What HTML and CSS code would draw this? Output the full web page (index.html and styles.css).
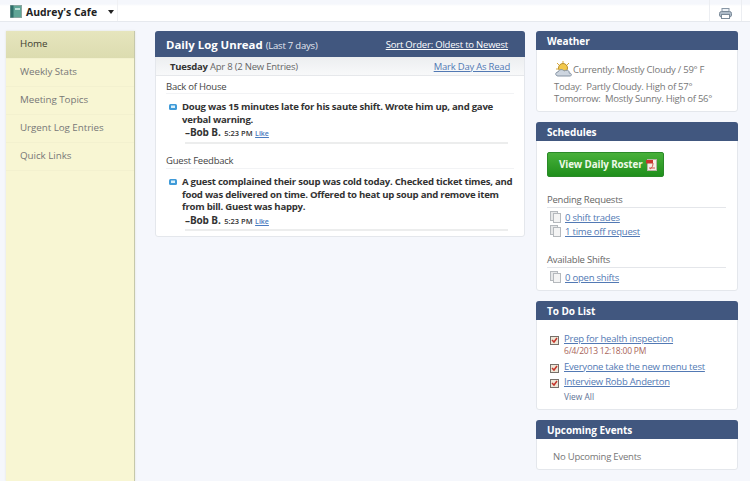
FILE: index.html
```html
<!DOCTYPE html>
<html>
<head>
<meta charset="utf-8">
<title>Audrey's Cafe</title>
<link rel="stylesheet" href="styles.css">
</head>
<body>
<header class="topbar">
  <div class="site">
    <svg class="book" width="12" height="13" viewBox="0 0 12 13"><rect x="0.5" y="0.5" width="11" height="12" fill="#5fa596" stroke="#8aa5a0"/><rect x="0.5" y="0.5" width="3" height="12" fill="#2f6f6a"/><rect x="5" y="3" width="5" height="2" fill="#bfe0d8"/></svg>
    <span class="site-name">Audrey's Cafe</span>
    <span class="caret"></span>
  </div>
  <div class="printer-cell">
    <svg width="13" height="11" viewBox="0 0 13 11"><rect x="3" y="0.5" width="7" height="4" fill="#eef2f6" stroke="#8796a5"/><rect x="0.5" y="3.5" width="12" height="5.5" rx="2" fill="#aebbc8" stroke="#7b8a99"/><rect x="2.5" y="6.5" width="8" height="4" fill="#fff" stroke="#7b8a99"/></svg>
  </div>
</header>
<div class="layout">
  <nav class="sidebar">
    <a class="nav-item active">Home</a>
    <a class="nav-item">Weekly Stats</a>
    <a class="nav-item">Meeting Topics</a>
    <a class="nav-item">Urgent Log Entries</a>
    <a class="nav-item">Quick Links</a>
  </nav>
  <main class="main">
    <section class="panel log">
      <div class="log-head">
        <h1>Daily Log Unread <small>(Last 7 days)</small></h1>
        <a class="sort">Sort Order: Oldest to Newest</a>
      </div>
      <div class="day-bar">
        <span><b>Tuesday</b> Apr 8 (2 New Entries)</span>
        <a class="link">Mark Day As Read</a>
      </div>
      <div class="group">
        <h2>Back of House</h2>
        <div class="entry">
          <svg class="msg" width="8" height="6" viewBox="0 0 8 6"><rect width="8" height="6" rx="1.5" fill="#3f9ad8"/><rect x="2" y="1.5" width="4" height="2.5" fill="#d8effa"/></svg>
          <div class="entry-body">
            <p>Doug was 15 minutes late for his saute shift. Wrote him up, and gave verbal warning.</p>
            <div class="by"><b>–Bob B.</b> <span class="time">5:23 PM</span> <a class="like">Like</a></div>
          </div>
        </div>
      </div>
      <div class="group second">
        <h2>Guest Feedback</h2>
        <div class="entry">
          <svg class="msg" width="8" height="6" viewBox="0 0 8 6"><rect width="8" height="6" rx="1.5" fill="#3f9ad8"/><rect x="2" y="1.5" width="4" height="2.5" fill="#d8effa"/></svg>
          <div class="entry-body">
            <p>A guest complained their soup was cold today. Checked ticket times, and food was delivered on time. Offered to heat up soup and remove item from bill. Guest was happy.</p>
            <div class="by last"><b>–Bob B.</b> <span class="time">5:23 PM</span> <a class="like">Like</a></div>
          </div>
        </div>
      </div>
    </section>
  </main>
  <aside class="right">
    <section class="panel card weather">
      <h3>Weather</h3>
      <div class="weather-body">
        <div class="now">
          <svg width="18" height="17" viewBox="0 0 18 17"><circle cx="8" cy="7" r="4.5" fill="#f2c84b" stroke="#b98f2a"/><g stroke="#d9a93a"><path d="M8 0v2M2 2l2 2M14 2l-2 2M1 8h2"/></g><path d="M3 15c-3 0-3-4 0-4 1-3 5-3 6-1 3-2 6 0 5 2 3 0 3 3 1 3z" fill="#cdd5df" stroke="#8593a3"/></svg>
          <span>Currently: Mostly Cloudy / 59° F</span>
        </div>
        <div>Today:&nbsp; Partly Cloudy. High of 57°</div>
        <div>Tomorrow:&nbsp; Mostly Sunny. High of 56°</div>
      </div>
    </section>
    <section class="panel card schedules">
      <h3>Schedules</h3>
      <div class="sched-body">
        <a class="roster">View Daily Roster
          <svg width="11" height="12" viewBox="0 0 11 12"><rect x="1.5" y="0.5" width="9" height="11" fill="#f4efe6" stroke="#b9b3a6"/><rect x="0" y="1" width="7" height="3.5" fill="#c8342c"/><path d="M4 10c2-1 3-3 3-6M3 9h6" stroke="#d2554c" fill="none"/></svg>
        </a>
        <h4>Pending Requests</h4>
        <div class="row"><svg class="docs" width="12" height="12" viewBox="0 0 12 12"><rect x="0.5" y="0.5" width="7" height="9" fill="#e6e7e8" stroke="#b5b9bd"/><rect x="3.5" y="2.5" width="7" height="9" fill="#f4f4f4" stroke="#b5b9bd"/></svg><a class="link">0 shift trades</a></div>
        <div class="row"><svg class="docs" width="12" height="12" viewBox="0 0 12 12"><rect x="0.5" y="0.5" width="7" height="9" fill="#e6e7e8" stroke="#b5b9bd"/><rect x="3.5" y="2.5" width="7" height="9" fill="#f4f4f4" stroke="#b5b9bd"/></svg><a class="link">1 time off request</a></div>
        <h4 class="avail">Available Shifts</h4>
        <div class="row"><svg class="docs" width="12" height="12" viewBox="0 0 12 12"><rect x="0.5" y="0.5" width="7" height="9" fill="#e6e7e8" stroke="#b5b9bd"/><rect x="3.5" y="2.5" width="7" height="9" fill="#f4f4f4" stroke="#b5b9bd"/></svg><a class="link">0 open shifts</a></div>
      </div>
    </section>
    <section class="panel card todo">
      <h3>To Do List</h3>
      <div class="todo-body">
        <div class="todo-row"><svg class="check" width="9" height="10" viewBox="0 0 9 10"><rect x="0.5" y="1.5" width="8" height="8" fill="#eee7d8" stroke="#77706a"/><path d="M2 5l2 2 3-4" stroke="#c5352b" stroke-width="1.5" fill="none"/></svg><div><a class="link">Prep for health inspection</a><div class="date">6/4/2013 12:18:00 PM</div></div></div>
        <div class="todo-row"><svg class="check" width="9" height="10" viewBox="0 0 9 10"><rect x="0.5" y="1.5" width="8" height="8" fill="#eee7d8" stroke="#77706a"/><path d="M2 5l2 2 3-4" stroke="#c5352b" stroke-width="1.5" fill="none"/></svg><div><a class="link">Everyone take the new menu test</a></div></div>
        <div class="todo-row"><svg class="check" width="9" height="10" viewBox="0 0 9 10"><rect x="0.5" y="1.5" width="8" height="8" fill="#eee7d8" stroke="#77706a"/><path d="M2 5l2 2 3-4" stroke="#c5352b" stroke-width="1.5" fill="none"/></svg><div><a class="link">Interview Robb Anderton</a></div></div>
        <a class="view-all">View All</a>
      </div>
    </section>
    <section class="panel card events">
      <h3>Upcoming Events</h3>
      <div class="events-body">No Upcoming Events</div>
    </section>
  </aside>
</div>
</body>
</html>
```
FILE: styles.css
```css
* { box-sizing: border-box; }
html, body { height: 100%; }
body {
  margin: 0;
  background: #f5f7fc;
  font-family: "Open Sans", sans-serif;
  font-size: 9.5px;
  letter-spacing: -0.22px;
  color: #555;
  overflow: hidden;
}
h1, h2, h3, h4, p { margin: 0; font-weight: normal; }
.topbar {
  height: 22px;
  background: linear-gradient(#f5f7fc 4px, #fff 6px);
  border-bottom: 1px solid #e6e9ee;
  display: flex;
  justify-content: space-between;
  padding-left: 6px;
}
.site { display: flex; align-items: center; gap: 4px; height: 21px; padding: 2px 0 0 4px; width: 112px; border-right: 1px solid #f0f1f4; }
.site-name { font-size: 10.4px; font-weight: 700; color: #222; white-space: nowrap; letter-spacing: 0; }
.caret { width: 0; height: 0; border: 3px solid transparent; border-top: 4px solid #222; border-bottom: 0; margin-left: 7px; }
.printer-cell { width: 33px; height: 21px; margin-right: 8px; padding-top: 5px; display: flex; align-items: center; justify-content: center; border-left: 1px solid #eceef2; border-right: 1px solid #eceef2; }
.layout { display: flex; height: 459px; padding-top: 9px; }
.sidebar {
  margin-left: 6px;
  width: 129px;
  background: #f8f6d3;
  border-right: 1px solid #c6c8aa;
  box-shadow: 0 0 2px #dfe2d8;
  flex: none;
}
.nav-item {
  display: block;
  height: 28px;
  line-height: 26px;
  padding-left: 14px;
  font-size: 9.8px;
  letter-spacing: -0.05px;
  color: #777;
  border-bottom: 1px solid #f3f1cf;
}
.nav-item.active {
  background: linear-gradient(#e6e5bd, #dcdcb0);
  color: #3f4030;
}
.main { margin-left: 20px; width: 370px; flex: none; }
.panel {
  background: #fff;
  border: 1px solid #e4e7ec;
  border-radius: 3px;
}
.log { height: 206px; }
.log-head {
  height: 26px;
  margin: -1px -1px 0;
  background: #41577f;
  border-radius: 3px 3px 0 0;
  color: #fff;
  display: flex;
  justify-content: space-between;
  padding: 0 17px 0 11px;
  align-items: center;
  letter-spacing: 0;
}
.log-head h1 { font-size: 11.4px; font-weight: 700; }
.log-head small { font-size: 9.5px; font-weight: 400; color: #e4e8f0; letter-spacing: -0.2px; }
.sort { font-size: 9.5px; letter-spacing: -0.2px; color: #fff; text-decoration: underline; }
.day-bar {
  height: 19px;
  background: linear-gradient(#eceef0, #f8f9fa);
  border-bottom: 1px solid #e6e8eb;
  display: flex;
  justify-content: space-between;
  align-items: center;
  padding: 0 14px 0 14px;
  color: #666;
}
.day-bar b { color: #333; }
.link { color: #5279b4; text-decoration: underline; }
.group { padding: 0 10px; }
.group h2 {
  font-size: 9.5px;
  color: #444;
  height: 18px;
  line-height: 21px;
  border-bottom: 1px solid #f2f3f5;
}
.group.second { margin-top: 7px; }
.group.second h2 { line-height: 19px; }
.entry { display: flex; padding-top: 7px; }
.msg { flex: none; margin: 3px 5px 0 3px; }
.entry-body { flex: 1; }
.entry-body p { font-size: 9.6px; font-weight: 700; color: #333; line-height: 12.5px; letter-spacing: -0.25px; }
.by {
  margin: 0 6px 0 3px;
  padding-bottom: 2px;
  border-bottom: 2px solid #eceded;
  line-height: 12px;
  color: #333;
  font-size: 10px;
  letter-spacing: -0.1px;
}
.by.last { padding-bottom: 1px; }
.time { font-size: 7.5px; font-weight: 600; margin-left: 1px; letter-spacing: 0; }
.like { font-size: 7px; color: #4a7bc0; text-decoration: underline; font-weight: 600; letter-spacing: 0; }
.right { margin-left: 11px; width: 202px; flex: none; display: flex; flex-direction: column; gap: 10px; }
.card h3 {
  height: 19px;
  margin: -1px -1px 0;
  background: #41577f;
  border-radius: 3px 3px 0 0;
  color: #fff;
  font-size: 10px;
  letter-spacing: -0.05px;
  font-weight: 700;
  line-height: 20px;
  padding-left: 11px;
}
.weather { height: 81px; }
.weather-body { padding: 9px 0 0 17px; line-height: 12px; color: #777; letter-spacing: -0.25px; }
.now { display: flex; align-items: center; margin: 2px 0 3px 1px; height: 17px; }
.schedules { height: 169px; }
.sched-body { padding: 11px 10px 0 10px; }
.roster {
  display: inline-flex;
  align-items: center;
  gap: 3px;
  width: 117px;
  height: 25px;
  background: linear-gradient(#48b03a, #1f8f1c);
  border: 1px solid #2a8a28;
  border-radius: 2px;
  color: #eef9e8;
  font-weight: 700;
  font-size: 9.8px;
  letter-spacing: -0.1px;
  padding-left: 11px;
}
.sched-body h4 { font-size: 9.5px; color: #666; margin-top: 14px; height: 17px; line-height: 17px; border-bottom: 1px solid #e4e6ea; margin-right: 1px; }
.sched-body h4.avail { margin-top: 13px; }
.row { display: flex; align-items: center; height: 14px; padding-left: 3px; gap: 3px; }
.sched-body h4 + .row { margin-top: 2px; }
.todo { height: 109px; }
.todo-body { padding: 12px 0 0 13px; }
.todo-row { display: flex; gap: 5px; margin-bottom: 2.5px; line-height: 13px; }
.check { flex: none; margin-top: 3px; }
.date { color: #a9655a; font-size: 8.5px; line-height: 11px; margin-bottom: 1px; letter-spacing: -0.2px; }
.view-all { color: #5e7295; font-size: 8.4px; margin: 3px 0 0 14px; line-height: 11px; display: block; letter-spacing: 0; }
.events { height: 50px; }
.events-body { padding: 11px 0 0 16px; color: #777; }
```
